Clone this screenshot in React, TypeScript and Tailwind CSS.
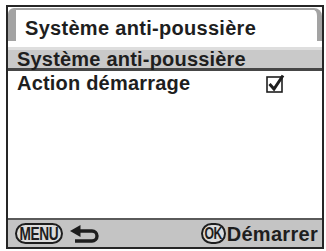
export default function App() {
  return (
    <div className="w-[326px] h-[251px] bg-white pt-[5px] pl-[6px] pr-[2px] pb-[2px] font-['Liberation_Sans',Arial,sans-serif]">
      <div className="h-full border-2 border-[#262626] flex flex-col">
        {/* Tab header */}
        <div className="h-[33px] mt-[1px] border-l-[8px] border-r-[5px] border-t-[2px] border-[#a3a3a3] rounded-tl-[6px] rounded-tr-[8px] flex items-center pl-[9px] pt-[5px]">
          <span className="text-[20px] font-bold text-[#1e1e1e] leading-none tracking-[0.3px]">Système anti-poussière</span>
        </div>
        <div className="h-[6px]" />
        {/* Selected row */}
        <div className="h-[24px] bg-[#c9c9c9] border-t-[3px] border-[#dedede] border-b-[3px] border-b-[#464646] flex items-center pl-[9px]">
          <span className="text-[20px] font-bold text-[#1e1e1e] leading-none tracking-[0.2px]">Système anti-poussière</span>
        </div>
        <div className="h-[24px] flex items-center pl-[9px] pr-[37px] justify-between">
          <span className="text-[20px] font-bold text-[#1e1e1e] leading-none tracking-[0.2px]">Action démarrage</span>
          <svg width="19" height="19" viewBox="0 0 19 19">
            <rect x="1" y="3" width="15" height="15" fill="none" stroke="#1e1e1e" strokeWidth="1.6" />
            <path d="M3.5 10 L8 15 L17 1.5" fill="none" stroke="#1e1e1e" strokeWidth="3" strokeLinejoin="miter" />
          </svg>
        </div>
        <div className="flex-1" />
        {/* Bottom bar */}
        <div className="h-[29px] bg-[#c4c4c4] border-t-2 border-[#5a5a5a] flex items-center justify-between pl-[7px] pr-[4px]">
          <div className="flex items-center gap-[7px]">
            <span className="w-[48px] h-[21px] rounded-full border-2 border-[#1e1e1e] bg-[#dcdcdc] flex items-center justify-center">
              <span className="inline-block text-[19px] font-bold text-[#1e1e1e] leading-none tracking-[-0.5px] scale-x-[0.72]">MENU</span>
            </span>
            <svg width="30" height="18" viewBox="0 0 30 18">
              <path d="M0 6 L10.5 0 L10.5 12 Z" fill="#1e1e1e" />
              <path d="M8 6 H22 A5 5 0 0 1 22 16 H5" fill="none" stroke="#1e1e1e" strokeWidth="3.4" />
            </svg>
          </div>
          <div className="flex items-center">
            <span className="w-[25px] h-[21px] rounded-full border-2 border-[#1e1e1e] bg-[#dcdcdc] flex items-center justify-center">
              <span className="inline-block text-[17px] font-bold text-[#1e1e1e] leading-none tracking-[-0.5px] scale-x-[0.72]">OK</span>
            </span>
            <span className="text-[20px] font-bold text-[#1e1e1e] leading-none tracking-[0.3px] ml-[1px]">Démarrer</span>
          </div>
        </div>
      </div>
    </div>
  );
}
